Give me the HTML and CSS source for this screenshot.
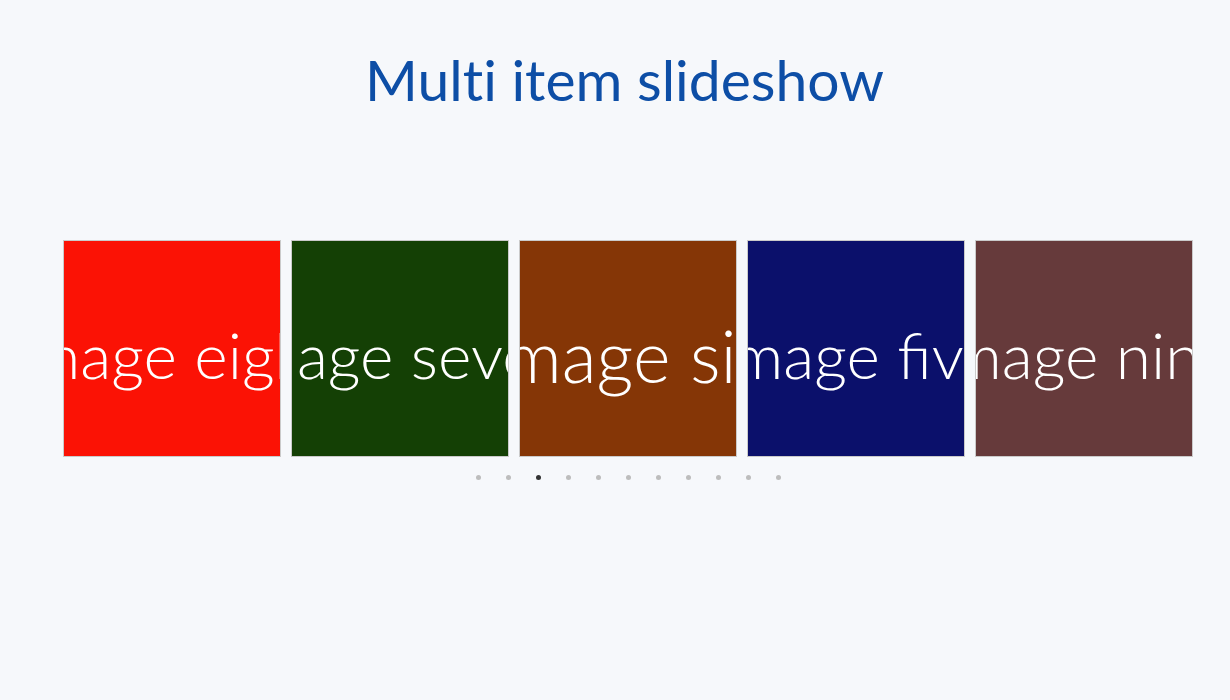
FILE: index.html
```html
<!DOCTYPE html>
<html lang="en">
<head>
<meta charset="utf-8">
<title>Multi item slideshow</title>
<link rel="stylesheet" href="styles.css">
</head>
<body>
<main class="page">
  <h1 class="title">Multi item slideshow</h1>
  <section class="carousel">
    <div class="track">
      <div class="slide slide-red"><span>Image eight</span></div>
      <div class="slide slide-green"><span>Image seven</span></div>
      <div class="slide slide-brown slide-big"><span>Image six</span></div>
      <div class="slide slide-navy"><span>Image five</span></div>
      <div class="slide slide-maroon"><span>Image nine</span></div>
    </div>
    <div class="dots">
      <span class="dot"></span>
      <span class="dot"></span>
      <span class="dot active"></span>
      <span class="dot"></span>
      <span class="dot"></span>
      <span class="dot"></span>
      <span class="dot"></span>
      <span class="dot"></span>
      <span class="dot"></span>
      <span class="dot"></span>
      <span class="dot"></span>
    </div>
  </section>
</main>
</body>
</html>
```
FILE: styles.css
```css
html, body {
  margin: 0;
  padding: 0;
  background: #f6f8fb;
}

.page {
  width: 1230px;
  height: 700px;
  padding-top: 43px;
  box-sizing: border-box;
}

.title {
  margin: 0 0 0 63px;
  width: 1130px;
  box-sizing: border-box;
  padding-right: 7px;
  text-align: center;
  font-family: "Lato", "Open Sans", sans-serif;
  font-weight: 400;
  font-size: 57px;
  line-height: 72px;
  font-variant-ligatures: none;
  font-feature-settings: "liga" 0;
  color: #0d4ea6;
}

.carousel {
  margin: 125px 0 0 63px;
  width: 1130px;
}

.track {
  display: flex;
  gap: 10px;
}

.slide {
  width: 218px;
  height: 217px;
  box-sizing: border-box;
  padding-top: 12px;
  border: 1px solid #cacaca;
  overflow: hidden;
  display: flex;
  align-items: center;
  justify-content: center;
  font-family: "Lato", "Roboto", sans-serif;
  font-weight: 300;
  font-size: 64px;
  color: #ffffff;
  white-space: nowrap;
}

.slide span {
  flex: none;
}

.slide-big {
  font-size: 72px;
}

.slide-red { background: #fb1205; }
.slide-green { background: #144005; }
.slide-brown { background: #853606; }
.slide-navy { background: #0b106b; }
.slide-maroon { background: #663a3b; }

.dots {
  display: flex;
  justify-content: center;
  gap: 25px;
  margin-top: 18px;
}

.dot {
  width: 5px;
  height: 5px;
  border-radius: 50%;
  background: #bdbdbd;
}

.dot.active {
  background: #333333;
}
```
